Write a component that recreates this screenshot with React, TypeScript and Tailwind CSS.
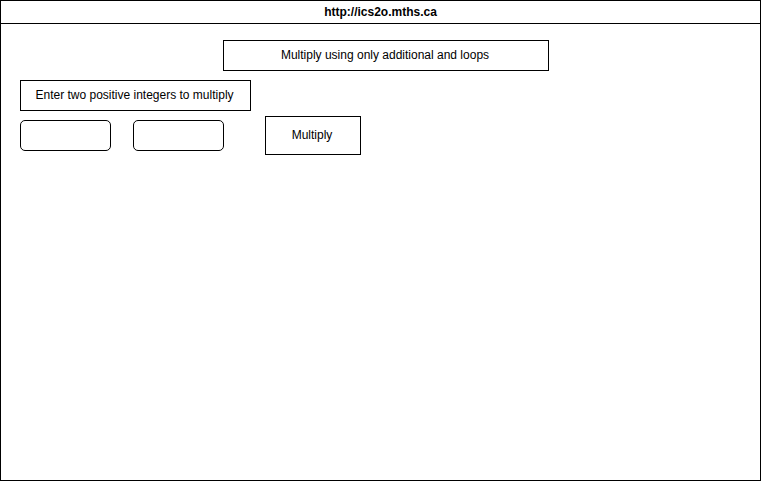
export default function App() {
  return (
    <div className="flex min-h-screen flex-col border border-black bg-white font-['Liberation_Sans',Arial,sans-serif] text-xs text-black">
      <header className="flex h-[23px] items-center justify-center border-b border-black font-bold">
        http://ics2o.mths.ca
      </header>
      <main className="flex flex-col px-[19px] pt-4">
        <h1 className="ml-[203px] flex h-[31px] w-[326px] items-center justify-center border border-black pr-0.5 pb-0.5">
          Multiply using only additional and loops
        </h1>
        <p id="prompt" className="mt-[9px] flex h-[31px] w-[231px] items-center justify-center border border-black pr-0.5 pb-0.5">
          Enter two positive integers to multiply
        </p>
        <form className="mt-[5px] flex items-center" onSubmit={(e) => e.preventDefault()}>
          <input aria-labelledby="prompt" type="text" className="h-[31px] w-[91px] rounded-[5px] border border-black px-2" />
          <input aria-labelledby="prompt" type="text" className="ml-[22px] h-[31px] w-[91px] rounded-[5px] border border-black px-2" />
          <button type="submit" className="ml-[41px] h-[39px] w-24 border border-black pr-0.5 pb-0.5">
            Multiply
          </button>
        </form>
      </main>
    </div>
  );
}
